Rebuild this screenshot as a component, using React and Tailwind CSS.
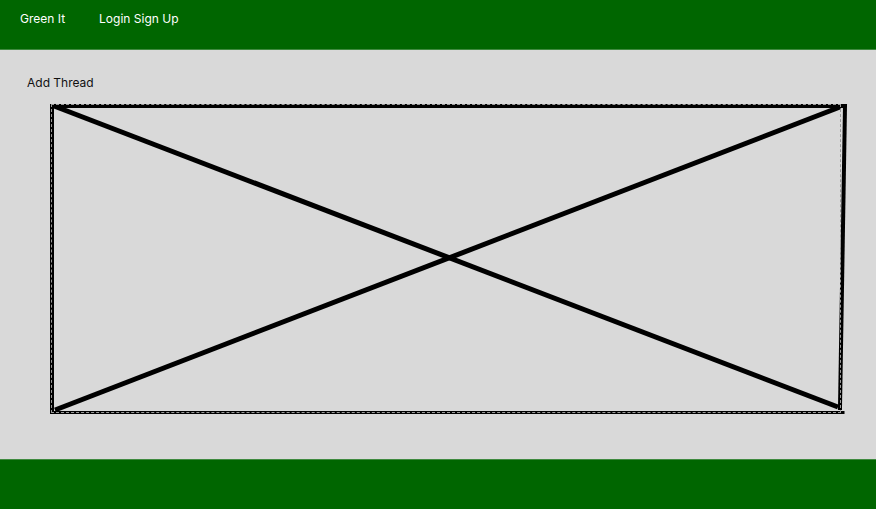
import React from "react";

function Placeholder() {
    return (
        <div className="relative ml-[51px] mt-[13px] w-[790px] h-[309px]">
            <svg className="absolute left-[-51px] top-[-104px] overflow-visible" width="876" height="509" viewBox="0 0 876 509">
                <g stroke="#000" fill="none" strokeLinecap="square">
                    <line x1="52" y1="106" x2="844" y2="106" strokeWidth="4" />
                    <line x1="52" y1="106" x2="52" y2="412" strokeWidth="4" />
                    <line x1="845" y1="106" x2="840" y2="408" strokeWidth="4" />
                    <line x1="52" y1="412.5" x2="843" y2="412.5" strokeWidth="3" />
                    <line x1="54" y1="106" x2="838" y2="407" strokeWidth="5" strokeLinecap="butt" />
                    <line x1="55" y1="410" x2="840" y2="107" strokeWidth="5" strokeLinecap="butt" />
                </g>
            </svg>
            <div className="absolute inset-0 border border-dashed border-[#9a9a9a]"></div>
        </div>
    );
}

export default function App() {
    return (
        <div className="w-[876px] h-[509px] flex flex-col bg-[#d9d9d9] font-['Inter',sans-serif] text-[12px] leading-[16px]">
            <div className="h-[50px] bg-[#006600] text-white flex gap-[34px] px-[20px] pt-[11px] border-b border-[#3f8a3f]">
                <span>Green It</span>
                <span>Login Sign Up</span>
            </div>
            <div className="flex-1">
                <div className="pl-[27px] pt-[25px] text-[#111]">Add Thread</div>
                <Placeholder />
            </div>
            <div className="h-[50px] bg-[#006600] border-t border-[#3f8a3f]"></div>
        </div>
    );
}
